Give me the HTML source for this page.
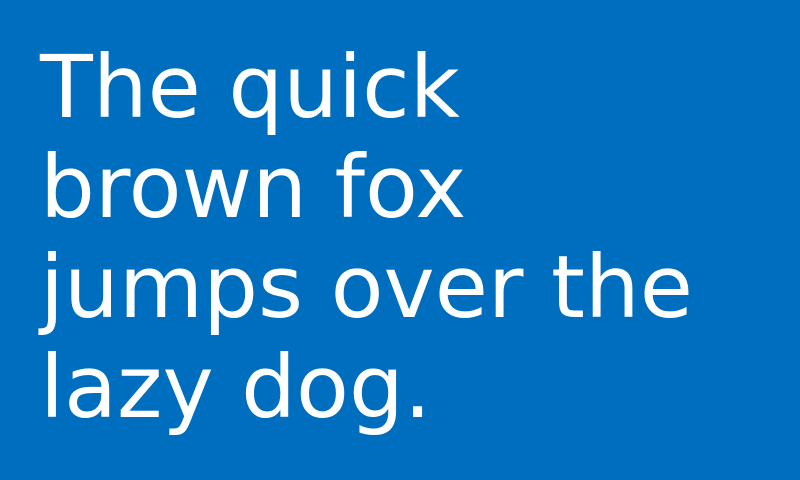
<!DOCTYPE html>
<html><head><meta charset="utf-8"><style>
html,body{margin:0;padding:0;width:800px;height:480px;overflow:hidden;background:#006ebe;}
div{position:absolute;left:40px;top:38px;font-family:"DejaVu Sans",sans-serif;font-size:86.5px;line-height:100px;color:#fff;white-space:nowrap;}
</style></head><body>
<div>The quick<br>brown fox<br>jumps over the<br>lazy dog.</div>
</body></html>
